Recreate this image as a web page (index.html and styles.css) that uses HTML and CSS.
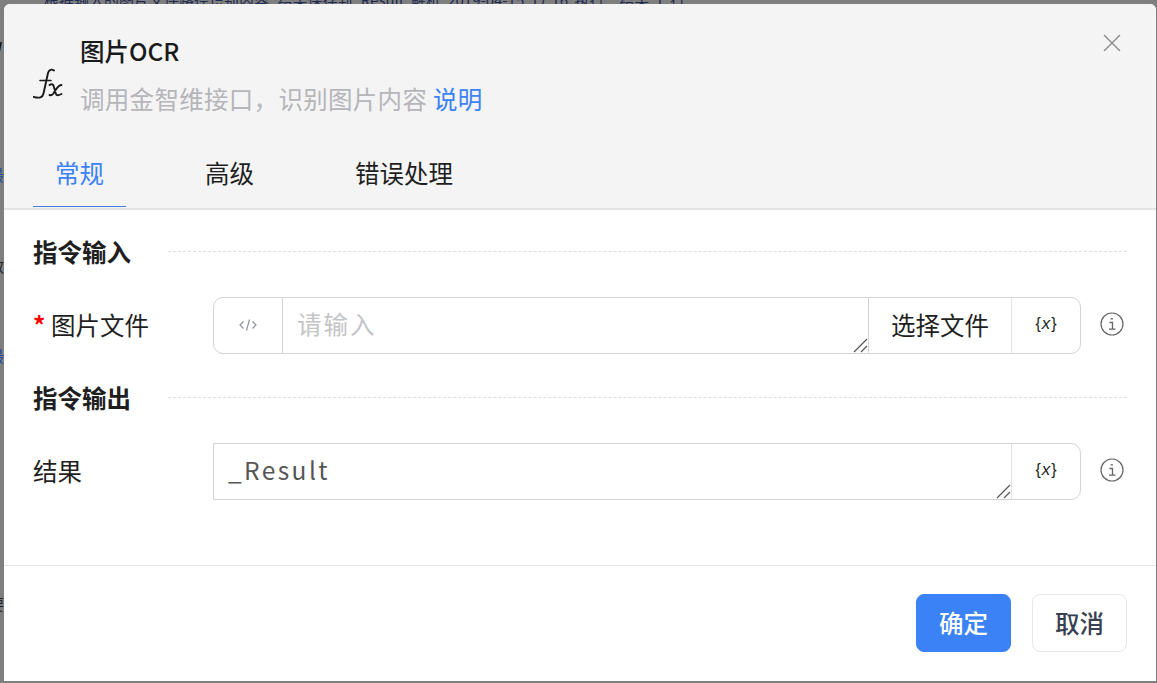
FILE: index.html
```html
<!DOCTYPE html>
<html lang="zh-CN">
<head>
<meta charset="utf-8">
<title>图片OCR</title>
<link rel="stylesheet" href="styles.css">
</head>
<body>
<div class="backdrop-text top" aria-hidden="true">根据输入的图片文件路径识别内容_结果保存到_Result 解析 2019-04-15 17:16 执行 _结果 1 行</div>
<div class="sliver s1" aria-hidden="true">W</div>
<div class="sliver s2" aria-hidden="true">最</div>
<div class="sliver s3" aria-hidden="true">效</div>
<div class="sliver s4" aria-hidden="true">最</div>
<div class="sliver s5" aria-hidden="true">要</div>
<main class="dialog">
  <header class="head">
    <div class="head-top">
      <svg class="fx" viewBox="0 0 32 36" width="32" height="36"><path d="M21 2.500c-2.500-1.800-5.200-.6-6 2.500L10.500 25.500c-.8 3.800-4 5.200-10 3.300" fill="none" stroke="#1a1a1a" stroke-width="1.900" stroke-linecap="round"/><path d="M7 12.500h11" stroke="#1a1a1a" stroke-width="1.600" stroke-linecap="round"/><path d="M16.500 17c2.800-1.500 3.800-.5 4.300 1.500l2 7c.5 2 1.800 2.500 5.700.5M28.500 17c-2 0-3.500 1.500-5.500 4.500l-3 4.500c-1 1.300-2 1.500-3.500 1" fill="none" stroke="#1a1a1a" stroke-width="1.900" stroke-linecap="round"/></svg>
      <div class="head-text">
        <h1 class="title">图片OCR</h1>
        <p class="desc">调用金智维接口，识别图片内容 <a class="link">说明</a></p>
      </div>
      <svg class="close" viewBox="0 0 18 18" width="18" height="18"><path d="M1 1l16 16M17 1L1 17" stroke="#8f9094" stroke-width="1.500"/></svg>
    </div>
    <nav class="tabs">
      <span class="tab active">常规</span>
      <span class="tab">高级</span>
      <span class="tab">错误处理</span>
    </nav>
  </header>
  <section class="body">
    <div class="section-title"><h2>指令输入</h2><i class="dash"></i></div>
    <div class="row">
      <label class="label"><span class="req">*</span> 图片文件</label>
      <div class="field">
        <span class="addon code"><svg viewBox="0 0 18 14" width="18" height="14"><path d="M4.500 3.500L1 7l3.500 3.500M13.500 3.500L17 7l-3.500 3.500M10.500 1.500L7.500 12.500" fill="none" stroke="#8d94a3" stroke-width="1.200"/></svg></span>
        <span class="input placeholder">请输入<svg class="grip" viewBox="0 0 16 16" width="16" height="16"><path d="M2 15L15 2M9 15l6-6" stroke="#555" stroke-width="1.200"/></svg></span>
        <span class="addon file">选择文件</span>
        <span class="addon var">{<em>x</em>}</span>
      </div>
      <svg class="info" viewBox="0 0 24 24" width="24" height="24"><circle cx="12" cy="12" r="11" fill="none" stroke="#666" stroke-width="1.200"/><path d="M9.500 10.500h3v6.500M9 17.200h6.500M10.500 6.800h2.500" fill="none" stroke="#666" stroke-width="1.300"/></svg>
    </div>
    <div class="section-title"><h2>指令输出</h2><i class="dash"></i></div>
    <div class="row">
      <label class="label">结果</label>
      <div class="field flat">
        <span class="input value">_Result<svg class="grip" viewBox="0 0 16 16" width="16" height="16"><path d="M2 15L15 2M9 15l6-6" stroke="#555" stroke-width="1.200"/></svg></span>
        <span class="addon var">{<em>x</em>}</span>
      </div>
      <svg class="info" viewBox="0 0 24 24" width="24" height="24"><circle cx="12" cy="12" r="11" fill="none" stroke="#666" stroke-width="1.200"/><path d="M9.500 10.500h3v6.500M9 17.200h6.500M10.500 6.800h2.500" fill="none" stroke="#666" stroke-width="1.300"/></svg>
    </div>
  </section>
  <footer class="foot">
    <button class="btn primary">确定</button>
    <button class="btn">取消</button>
  </footer>
</main>
</body>
</html>
```

FILE: styles.css
```css
* { box-sizing: border-box; }
html, body { height: 100%; margin: 0; }
body {
  background: #7f7f7f;
  font-family: "Noto Sans CJK SC", "Noto Sans", sans-serif;
  color: #1f1f1f;
  padding: 4px 1px 2px 4px;
  overflow: hidden;
  position: relative;
}
.backdrop-text {
  position: absolute;
  top: -7px;
  left: 44px;
  font-size: 15px;
  line-height: 14px;
  color: #1f2c52;
  white-space: nowrap;
  word-spacing: 3px;
}
.sliver {
  position: absolute;
  left: -11px;
  font-size: 15px;
  line-height: 18px;
}
.s1 { top: 38px; color: #000; }
.s2 { top: 166px; color: #1f4aa0; }
.s3 { top: 257px; color: #222; }
.s4 { top: 347px; color: #1f4aa0; }
.s5 { top: 595px; color: #222; }
.dialog {
  position: relative;
  height: 100%;
  background: #fff;
  border-radius: 6px 6px 0 0;
  display: flex;
  flex-direction: column;
  overflow: hidden;
}
.head {
  background: #f4f4f4;
  border-bottom: 2px solid #e4e4e4;
  height: 206px;
  display: flex;
  flex-direction: column;
  flex: none;
}
.head-top {
  display: flex;
  height: 128px;
  padding: 0 35px 0 29px;
  position: relative;
}
.fx { margin-top: 64px; flex: none; }
.head-text { margin-left: 15px; flex: 1; }
.title {
  margin: 28px 0 0;
  font-size: 24.500px;
  line-height: 38px;
  font-weight: 500;
  color: #1a1a1a;
}
.desc {
  margin: 11px 0 0;
  font-size: 24.500px;
  line-height: 36px;
  letter-spacing: .3px;
  font-weight: 400;
  color: #b5b5ba;
}
.link { color: #3b82f6; }
.close { margin-top: 30px; flex: none; }
.tabs {
  display: flex;
  padding-left: 29px;
  height: 76px;
}
.tab {
  font-size: 24.500px;
  line-height: 36px;
  padding: 23px 22px 0;
  margin-right: 57px;
  height: 76px;
  color: #1f1f1f;
}
.tab.active {
  color: #3b82f6;
  border-bottom: 1px solid #3f7fe0;
  height: 75px;
}
.body {
  flex: 1;
  padding: 24px 29px 0;
}
.section-title {
  display: flex;
  align-items: center;
  height: 36px;
}
.section-title h2 {
  margin: 0;
  font-size: 24.500px;
  line-height: 36px;
  font-weight: 700;
  color: #1f1f1f;
  width: 135px;
  flex: none;
}
.dash {
  flex: 1;
  border-top: 1px dashed #dfdfe2;
  margin-top: -2px;
}
.row {
  display: flex;
  align-items: center;
  margin: 27px 0;
  height: 57px;
}
.row + .section-title { margin-top: -1px; }
.label {
  width: 180px;
  flex: none;
  font-size: 24.500px;
  line-height: 36px;
  padding-bottom: 2px;
}
.req { color: #f00; font-weight: 700; }
.field {
  width: 868px;
  height: 57px;
  border: 1px solid #d4d4d8;
  border-radius: 10px;
  display: flex;
  flex: none;
  overflow: hidden;
}
.field.flat { border-top-left-radius: 0; border-bottom-left-radius: 0; }
.addon {
  display: flex;
  align-items: center;
  justify-content: center;
  flex: none;
  height: 100%;
}
.code { width: 69px; border-right: 1px solid #d4d4d8; padding-bottom: 2px; }
.file {
  width: 143px;
  border-left: 1px solid #d4d4d8;
  font-size: 24.500px;
  color: #1f1f1f;
  padding-bottom: 3px;
}
.var {
  width: 69px;
  border-left: 1px solid #e4e4e7;
  font-size: 16px;
  color: #1f1f1f;
  font-family: "Liberation Sans", sans-serif;
  padding-bottom: 3px;
}
.var em { font-size: 17px; margin: 0 1px; }
.input {
  flex: 1;
  position: relative;
  display: flex;
  align-items: center;
  padding: 0 0 4px 14px;
  font-size: 24.500px;
  letter-spacing: 2px;
}
.placeholder { color: #c4c4c7; }
.value { color: #555; letter-spacing: 2.400px; }
.grip { position: absolute; right: 0; bottom: 0; }
.info { margin: -4px 0 0 19px; flex: none; }
.foot {
  flex: none;
  height: 116px;
  border-top: 1px solid #e4e4e7;
  display: flex;
  justify-content: flex-end;
  gap: 21px;
  padding: 28px 29px 0;
}
.btn {
  width: 95px;
  height: 58px;
  border: 1px solid #e5e7eb;
  border-radius: 8px;
  background: #fff;
  color: #374151;
  font: 500 24.500px/1 "Noto Sans CJK SC", sans-serif;
  padding: 0;
}
.btn.primary { background: #3b82f6; border-color: #3b82f6; color: #fff; }
```
